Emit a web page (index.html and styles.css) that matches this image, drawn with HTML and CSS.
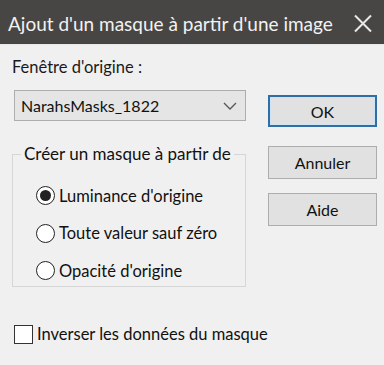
FILE: index.html
```html
<!DOCTYPE html>
<html lang="fr">

<head>
    <meta charset="UTF-8">
    <meta name="viewport" content="width=device-width, initial-scale=1.0">
    <link rel="stylesheet" href="styles.css">
    <title>Ajout d'un masque</title>
</head>

<body>
    <div class="fenetre">
        <div class="titre">
            <span class="titre-texte">Ajout d'un masque à partir d'une image</span>
            <svg class="fermer" width="18" height="19" viewBox="0 0 18 19">
                <path d="M1 1.5 L17 17.5 M17 1.5 L1 17.5" stroke="#e8e8e8" stroke-width="2" fill="none" />
            </svg>
        </div>

        <div class="contenu">
            <div class="gauche">
                <label class="etiquette" for="source">Fenêtre d'origine :</label>
                <div class="liste" id="source">
                    <span>NarahsMasks_1822</span>
                    <svg width="14" height="8" viewBox="0 0 14 8">
                        <path d="M1 1 L7 7 L13 1" stroke="#555" stroke-width="1.3" fill="none" />
                    </svg>
                </div>

                <fieldset class="groupe">
                    <legend>Créer un masque à partir de</legend>
                    <label class="option">
                        <input type="radio" name="mode" checked>Luminance d'origine
                    </label>
                    <label class="option">
                        <input type="radio" name="mode">Toute valeur sauf zéro
                    </label>
                    <label class="option">
                        <input type="radio" name="mode">Opacité d'origine
                    </label>
                </fieldset>
            </div>

            <div class="boutons">
                <button class="bouton defaut">OK</button>
                <button class="bouton">Annuler</button>
                <button class="bouton">Aide</button>
            </div>
        </div>

        <label class="inverser">
            <input type="checkbox">Inverser les données du masque
        </label>
    </div>
</body>

</html>
```

FILE: styles.css
```css
* {
    margin: 0;
    padding: 0;
    box-sizing: border-box;
    font-family: 'Lato', sans-serif;
    white-space: nowrap;
}

body {
    width: 384px;
    height: 365px;
    background-color: #f0f0f0;
    overflow: hidden;
}

.fenetre {
    display: flex;
    flex-direction: column;
    height: 365px;
}

.titre {
    height: 45px;
    background-color: #484644;
    display: flex;
    align-items: center;
    justify-content: space-between;
    padding: 0 12px 0 8px;
    border-bottom: 1px solid #e8e8e8;
}

.titre-texte {
    color: #f2f2f2;
    font-size: 19px;
    padding-top: 2px;
}

.fermer {
    margin-top: 3px;
}

.contenu {
    display: flex;
    padding: 0 7px 0 12px;
    justify-content: space-between;
}

.gauche {
    width: 234px;
    display: flex;
    flex-direction: column;
}

.etiquette {
    color: #1a1a1a;
    font-size: 16.5px;
    margin-top: 12px;
    line-height: 20px;
}

.liste {
    margin: 13px 0 0 2px;
    width: 232px;
    height: 31px;
    border: 1px solid #adadad;
    background-color: #e5e5e5;
    display: flex;
    align-items: center;
    justify-content: space-between;
    padding: 0 8px 0 6px;
    font-size: 16px;
    color: #111;
}

.groupe {
    margin-top: 23px;
    height: 143px;
    border: 1px solid #d6d6d6;
    padding: 18px 0 0 23px;
    display: flex;
    flex-direction: column;
    gap: 10.5px;
}

legend {
    font-size: 17px;
    color: #111;
    padding: 0 3px;
    margin-left: -15px;
    line-height: 20px;
}

.option {
    display: flex;
    align-items: center;
    font-size: 16.5px;
    color: #111;
    height: 27px;
}

.option input {
    appearance: none;
    width: 19px;
    height: 19px;
    border: 1.5px solid #222;
    border-radius: 50%;
    background-color: #fff;
    margin-right: 4px;
    display: flex;
    align-items: center;
    justify-content: center;
}

.option input:checked::after {
    content: "";
    width: 11px;
    height: 11px;
    border-radius: 50%;
    background-color: #222;
}

.boutons {
    display: flex;
    flex-direction: column;
    margin-top: 50px;
    width: 109px;
    gap: 19px;
}

.bouton {
    height: 33px;
    border: 1px solid #adadad;
    background-color: #e1e1e1;
    font-size: 16px;
    color: #111;
}

.boutons .bouton:last-child {
    margin-top: -5px;
}

.defaut {
    height: 32px;
    border: 2px solid #2f6fa6;
    box-shadow: inset 0 0 0 1px #cfe3f3;
}

.inverser {
    margin: 37px 0 0 14px;
    display: flex;
    align-items: center;
    font-size: 16.5px;
    color: #111;
}

.inverser input {
    appearance: none;
    width: 19px;
    height: 19px;
    border: 1.5px solid #333;
    background-color: #fff;
    margin-right: 4px;
}
```
